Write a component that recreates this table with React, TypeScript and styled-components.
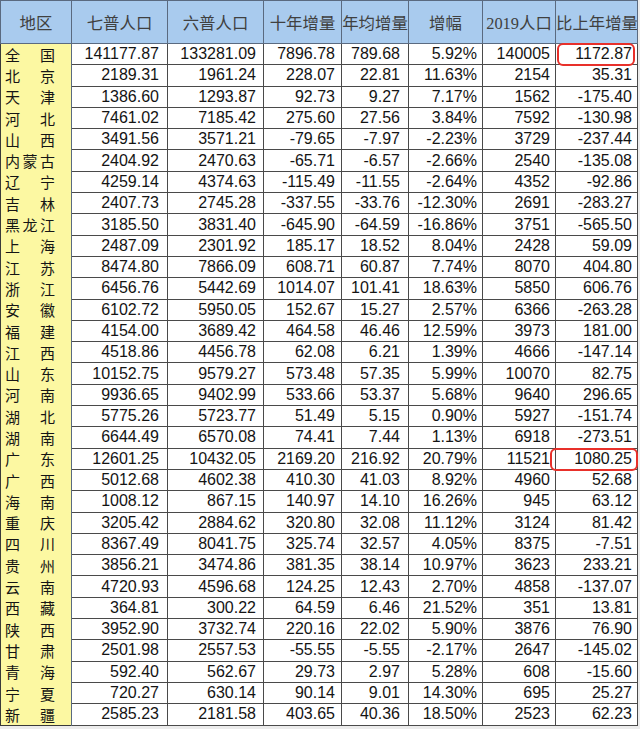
import React from 'react'
import styled, { createGlobalStyle } from 'styled-components'

const GlobalStyle = createGlobalStyle`
  html, body {
    margin: 0;
    padding: 0;
    background: #ececec;
  }
`

const Sheet = styled.div`
  width: 640px;
  height: 729px;
  overflow: hidden;
  background: #ececec;
`

const Table = styled.table`
  width: 637px;
  table-layout: fixed;
  border-collapse: collapse;
  background: #ffffff;
  border: 1px solid #3a3a3a;
`

const HeadRow = styled.tr`
  height: 43px;
  background: #a9cbee;
`

const HeadCell = styled.th`
  padding: 0;
  font-family: 'Liberation Serif', 'Noto Sans CJK SC', serif;
  font-size: 16.4px;
  font-weight: 400;
  color: #404040;
  text-align: center;
  white-space: nowrap;
  overflow: hidden;
  border: 1px solid #5a6a80;
`

const BodyRow = styled.tr`
  height: 21.3px;
`

const RegionCell = styled.td`
  padding: 0 0 0 4px;
  background: #fcf8a2;
  font-family: 'Noto Sans CJK SC', sans-serif;
  font-size: 15px;
  letter-spacing: 2.5px;
  line-height: 15px;
  color: #151515;
  white-space: nowrap;
  border-right: 1px solid #5a6a80;
`

const NumCell = styled.td<{ $pad: number }>`
  position: relative;
  padding: 0 ${({ $pad }) => $pad}px 0 0;
  font-family: 'Liberation Sans', Arial, sans-serif;
  font-size: 16px;
  line-height: 18px;
  color: #141414;
  text-align: right;
  white-space: nowrap;
  border: 1px solid #4a4a4a;
`

const Marker = styled.span<{ $left: number; $right: number; $top: number; $bottom: number }>`
  position: absolute;
  left: ${({ $left }) => $left}px;
  right: ${({ $right }) => $right}px;
  top: ${({ $top }) => $top}px;
  bottom: ${({ $bottom }) => $bottom}px;
  border: 2px solid #e8302a;
  border-radius: 6px;
  pointer-events: none;
`

const columns = [71, 96, 96, 78, 67, 74, 73, 82]
const pads = [8, 7, 6, 8, 5, 5, 5]
const headers = ['地区', '七普人口', '六普人口', '十年增量', '年均增量', '增幅', '2019人口', '比上年增量']

const rows: string[][] = [
  ['全　国', '141177.87', '133281.09', '7896.78', '789.68', '5.92%', '140005', '1172.87'],
  ['北　京', '2189.31', '1961.24', '228.07', '22.81', '11.63%', '2154', '35.31'],
  ['天　津', '1386.60', '1293.87', '92.73', '9.27', '7.17%', '1562', '-175.40'],
  ['河　北', '7461.02', '7185.42', '275.60', '27.56', '3.84%', '7592', '-130.98'],
  ['山　西', '3491.56', '3571.21', '-79.65', '-7.97', '-2.23%', '3729', '-237.44'],
  ['内蒙古', '2404.92', '2470.63', '-65.71', '-6.57', '-2.66%', '2540', '-135.08'],
  ['辽　宁', '4259.14', '4374.63', '-115.49', '-11.55', '-2.64%', '4352', '-92.86'],
  ['吉　林', '2407.73', '2745.28', '-337.55', '-33.76', '-12.30%', '2691', '-283.27'],
  ['黑龙江', '3185.50', '3831.40', '-645.90', '-64.59', '-16.86%', '3751', '-565.50'],
  ['上　海', '2487.09', '2301.92', '185.17', '18.52', '8.04%', '2428', '59.09'],
  ['江　苏', '8474.80', '7866.09', '608.71', '60.87', '7.74%', '8070', '404.80'],
  ['浙　江', '6456.76', '5442.69', '1014.07', '101.41', '18.63%', '5850', '606.76'],
  ['安　徽', '6102.72', '5950.05', '152.67', '15.27', '2.57%', '6366', '-263.28'],
  ['福　建', '4154.00', '3689.42', '464.58', '46.46', '12.59%', '3973', '181.00'],
  ['江　西', '4518.86', '4456.78', '62.08', '6.21', '1.39%', '4666', '-147.14'],
  ['山　东', '10152.75', '9579.27', '573.48', '57.35', '5.99%', '10070', '82.75'],
  ['河　南', '9936.65', '9402.99', '533.66', '53.37', '5.68%', '9640', '296.65'],
  ['湖　北', '5775.26', '5723.77', '51.49', '5.15', '0.90%', '5927', '-151.74'],
  ['湖　南', '6644.49', '6570.08', '74.41', '7.44', '1.13%', '6918', '-273.51'],
  ['广　东', '12601.25', '10432.05', '2169.20', '216.92', '20.79%', '11521', '1080.25'],
  ['广　西', '5012.68', '4602.38', '410.30', '41.03', '8.92%', '4960', '52.68'],
  ['海　南', '1008.12', '867.15', '140.97', '14.10', '16.26%', '945', '63.12'],
  ['重　庆', '3205.42', '2884.62', '320.80', '32.08', '11.12%', '3124', '81.42'],
  ['四　川', '8367.49', '8041.75', '325.74', '32.57', '4.05%', '8375', '-7.51'],
  ['贵　州', '3856.21', '3474.86', '381.35', '38.14', '10.97%', '3623', '233.21'],
  ['云　南', '4720.93', '4596.68', '124.25', '12.43', '2.70%', '4858', '-137.07'],
  ['西　藏', '364.81', '300.22', '64.59', '6.46', '21.52%', '351', '13.81'],
  ['陕　西', '3952.90', '3732.74', '220.16', '22.02', '5.90%', '3876', '76.90'],
  ['甘　肃', '2501.98', '2557.53', '-55.55', '-5.55', '-2.17%', '2647', '-145.02'],
  ['青　海', '592.40', '562.67', '29.73', '2.97', '5.28%', '608', '-15.60'],
  ['宁　夏', '720.27', '630.14', '90.14', '9.01', '14.30%', '695', '25.27'],
  ['新　疆', '2585.23', '2181.58', '403.65', '40.36', '18.50%', '2523', '62.23']
]

// red boxes drawn over two cells of the last column
const marked: Record<number, { l: number; r: number; t: number; b: number }> = {
  0: { l: 1, r: 2, t: -1, b: -2 },
  19: { l: -6, r: -1, t: -1, b: -2 }
}

export default function App() {
  return (
    <Sheet>
      <GlobalStyle />
      <Table>
        <colgroup>
          {columns.map((w, i) => (
            <col key={i} style={{ width: w }} />
          ))}
        </colgroup>
        <thead>
          <HeadRow>
            {headers.map(h => (
              <HeadCell key={h}>{h}</HeadCell>
            ))}
          </HeadRow>
        </thead>
        <tbody>
          {rows.map((row, ri) => (
            <BodyRow key={row[0]}>
              <RegionCell>{row[0]}</RegionCell>
              {row.slice(1).map((v, ci) => (
                <NumCell key={ci} $pad={pads[ci]}>
                  {v}
                  {ci === 6 && marked[ri] && (
                    <Marker
                      $left={marked[ri].l}
                      $right={marked[ri].r}
                      $top={marked[ri].t}
                      $bottom={marked[ri].b}
                    />
                  )}
                </NumCell>
              ))}
            </BodyRow>
          ))}
        </tbody>
      </Table>
    </Sheet>
  )
}
